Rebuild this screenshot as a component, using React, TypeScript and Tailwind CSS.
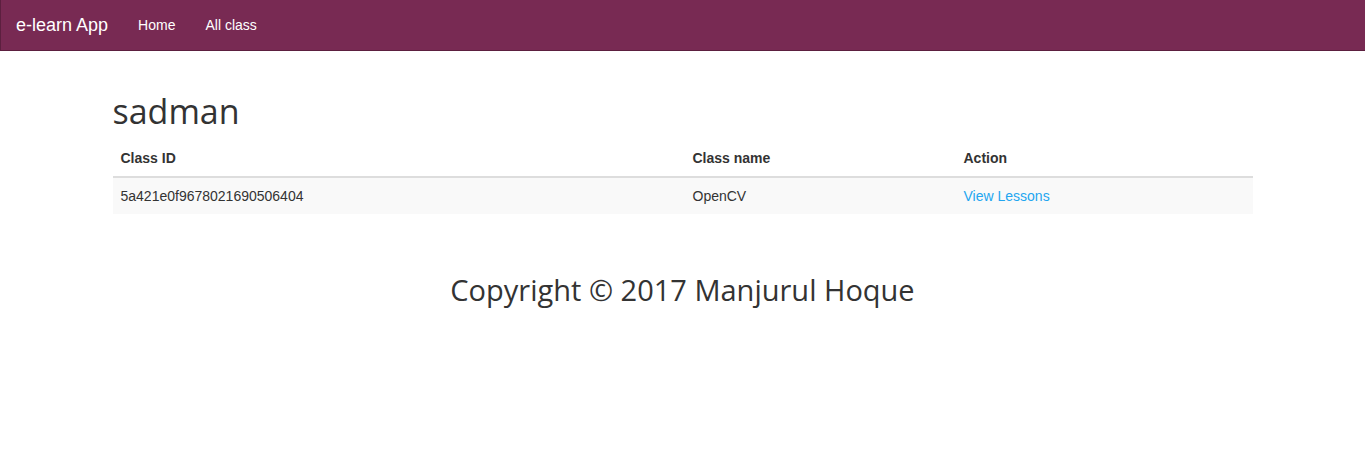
export default function App() {
  const rows = [{ id: '5a421e0f9678021690506404', name: 'OpenCV' }];

  return (
    <div className="min-h-[464px] bg-white font-['Liberation_Sans',Arial,sans-serif] text-[14px] leading-[20px] text-[#333]">
      {/* Navbar */}
      <nav className="flex h-[51px] items-stretch border border-t-0 border-r-0 border-[#5c1f3f] bg-[#782a53]">
        <a className="flex items-center px-[15px] text-[18px] text-white">e-learn App</a>
        <a className="flex items-center px-[15px] text-white">Home</a>
        <a className="flex items-center px-[15px] text-white">All class</a>
      </nav>

      <div className="mx-auto w-[1170px] px-[15px] pt-[40px]">
        <h1 className="mb-[9px] font-['Open_Sans',sans-serif] text-[34px] leading-[40px] text-[#333]">sadman</h1>

        <table className="mb-5 w-full border-collapse">
          <thead>
            <tr className="border-b-2 border-[#ddd] text-left">
              <th className="w-[572px] p-2 font-bold">Class ID</th>
              <th className="w-[271px] p-2 font-bold">Class name</th>
              <th className="p-2 font-bold">Action</th>
            </tr>
          </thead>
          <tbody>
            {rows.map(r => (
              <tr key={r.id} className="bg-[#f9f9f9]">
                <td className="p-2">{r.id}</td>
                <td className="p-2">{r.name}</td>
                <td className="p-2">
                  <a className="text-[#23a6f0]">View Lessons</a>
                </td>
              </tr>
            ))}
          </tbody>
        </table>

        <footer className="pt-[39px] text-center font-['Open_Sans',sans-serif] text-[29px] leading-[33px] text-[#333]">
          Copyright © 2017 Manjurul Hoque
        </footer>
      </div>
    </div>
  );
}
